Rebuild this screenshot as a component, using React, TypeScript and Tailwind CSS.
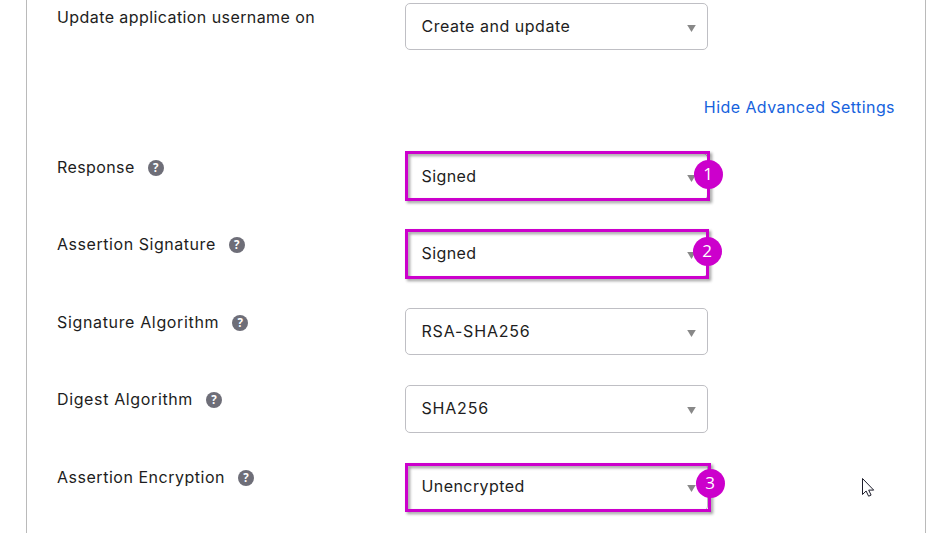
interface Setting {
  label: string;
  value: string;
  help?: boolean;
  rowClass: string;
  labelClass: string;
  valueClass: string;
  mark?: { step: number; frameClass: string; badgeClass: string };
}

const topSetting: Setting = {
  label: 'Update application username on',
  value: 'Create and update',
  rowClass: 'h-[47px]',
  labelClass: 'tracking-[0.42px]',
  valueClass: 'tracking-[0.52px]',
};

const advancedSettings: Setting[] = [
  {
    label: 'Response',
    value: 'Signed',
    help: true,
    rowClass: 'h-[47px]',
    labelClass: 'tracking-[0.4px]',
    valueClass: 'tracking-[0.4px]',
    mark: {
      step: 1,
      frameClass: '-top-[2px] w-[305px] h-[50px]',
      badgeClass: 'top-[6.5px] left-[288.75px]',
    },
  },
  {
    label: 'Assertion Signature',
    value: 'Signed',
    help: true,
    rowClass: 'mt-[30px] h-[47px]',
    labelClass: 'tracking-[0.55px]',
    valueClass: 'tracking-[0.4px]',
    mark: {
      step: 2,
      frameClass: '-top-px w-[304px] h-[50px]',
      badgeClass: 'top-[6.5px] left-[287.75px]',
    },
  },
  {
    label: 'Signature Algorithm',
    value: 'RSA-SHA256',
    help: true,
    rowClass: 'mt-[31px] h-[47px]',
    labelClass: 'tracking-[0.65px]',
    valueClass: 'tracking-[0.8px]',
  },
  {
    label: 'Digest Algorithm',
    value: 'SHA256',
    help: true,
    rowClass: 'mt-[30px] h-[48px]',
    labelClass: 'tracking-[0.63px]',
    valueClass: 'tracking-[0.8px]',
  },
  {
    label: 'Assertion Encryption',
    value: 'Unencrypted',
    help: true,
    rowClass: 'mt-[30px] h-[48px]',
    labelClass: 'tracking-[0.52px]',
    valueClass: 'tracking-[0.42px]',
    mark: {
      step: 3,
      frameClass: 'top-0 w-[306px] h-[49px]',
      badgeClass: 'top-[5.5px] left-[290.75px]',
    },
  },
];

function HelpIcon() {
  return (
    <span className="mt-[1px] flex h-4 w-4 shrink-0 items-center justify-center rounded-full bg-[#6e6e78] font-['Open_Sans',sans-serif] text-[11.5px] font-bold leading-4 text-white">
      ?
    </span>
  );
}

function SettingRow({ label, value, help, rowClass, labelClass, valueClass, mark }: Setting) {
  return (
    <div className={`flex ${rowClass}`}>
      <div className="flex w-[348px] items-start gap-[13px] pt-[6px]">
        <span className={`whitespace-nowrap leading-4 ${labelClass}`}>{label}</span>
        {help && <HelpIcon />}
      </div>
      <div className="relative flex w-[303px] items-start justify-between rounded-[5px] border border-[#bfbfc4] pr-[11px] pl-[15.5px]">
        <span className={`mt-[14px] whitespace-nowrap leading-4 ${valueClass}`}>{value}</span>
        <svg className="mt-[21px]" width="9" height="7" viewBox="0 0 9 7">
          <path d="M0.2 0h8.6L4.5 7z" fill="#888888" />
        </svg>
        {mark && (
          <div className="absolute -top-px -left-px">
            <div
              className={`absolute left-0 border-[3px] border-[#cc00cc] drop-shadow-[2px_2px_1.5px_rgba(0,0,0,0.4)] ${mark.frameClass}`}
            />
            <div
              className={`absolute flex h-[29.5px] w-[29.5px] items-center justify-center rounded-full bg-[#cc00cc] pr-[1px] pb-[2px] font-['Open_Sans',sans-serif] text-[17px] leading-none text-white ${mark.badgeClass}`}
            >
              {mark.step}
            </div>
          </div>
        )}
      </div>
    </div>
  );
}

function Cursor() {
  return (
    <svg className="absolute top-[477px] left-[861px]" width="14" height="21" viewBox="0 0 14 21">
      <path
        d="M1.5 1.5v16l3.6-3.5 2.5 5.2 2.5-1.1-2.4-5h5z"
        fill="#ffffff"
        stroke="#1d1d2b"
        strokeWidth="1"
      />
    </svg>
  );
}

export default function App() {
  return (
    <div className="relative h-[533px] w-[945px] overflow-hidden bg-white pl-[26px] font-['Inter',sans-serif] text-[16px] text-[#1d1d21]">
      <div className="h-full w-[900px] border-x border-[#bababa] pt-[3px] pr-[30px] pl-[30px]">
        <SettingRow {...topSetting} />
        <div className="flex h-[103px] justify-end pt-[49px]">
          <a className="whitespace-nowrap leading-4 tracking-[0.43px] text-[#1662dd]">Hide Advanced Settings</a>
        </div>
        {advancedSettings.map((setting) => (
          <SettingRow key={setting.label} {...setting} />
        ))}
      </div>
      <Cursor />
    </div>
  );
}
